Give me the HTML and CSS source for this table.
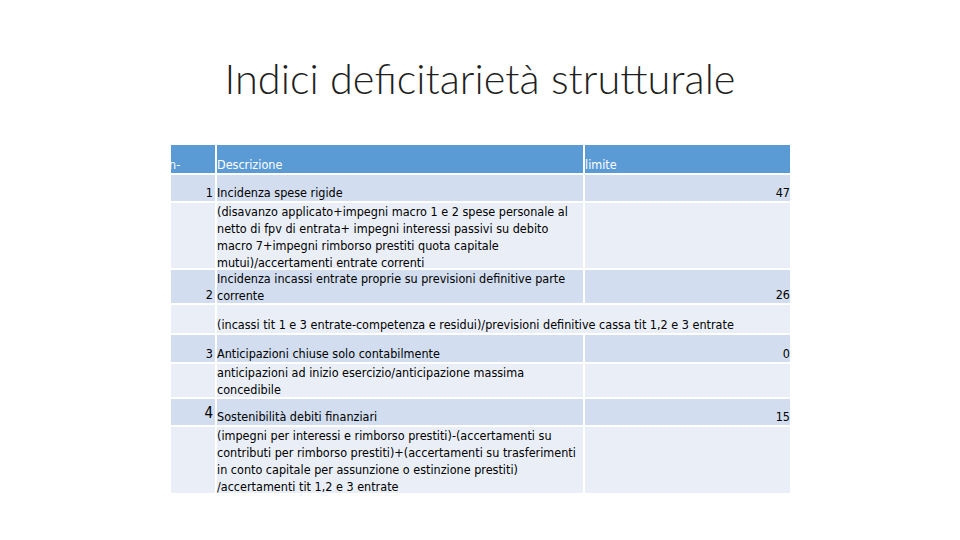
FILE: index.html
```html
<!DOCTYPE html>
<html lang="it">
<head>
<meta charset="utf-8">
<title>Indici deficitarietà strutturale</title>
<link rel="stylesheet" href="styles.css">
</head>
<body>
<div class="slide">
  <header class="title-wrap">
    <h1 class="title">Indici deficitarietà strutturale</h1>
  </header>
  <div class="table">
    <div class="c hd bot first">n-</div>
    <div class="c hd bot">Descrizione</div>
    <div class="c hd bot">limite</div>

    <div class="c mid bot num">1</div>
    <div class="c mid bot">Incidenza spese rigide</div>
    <div class="c mid bot val">47</div>

    <div class="c lt"></div>
    <div class="c lt top"><div>(disavanzo applicato+impegni macro 1 e 2 spese personale al<br>netto di fpv di entrata+ impegni interessi passivi su debito<br>macro 7+impegni rimborso prestiti quota capitale<br>mutui)/accertamenti entrate correnti</div></div>
    <div class="c lt"></div>

    <div class="c mid bot num">2</div>
    <div class="c mid top"><div>Incidenza incassi entrate proprie su previsioni definitive parte<br>corrente</div></div>
    <div class="c mid bot val">26</div>

    <div class="c lt"></div>
    <div class="c lt bot span">(incassi tit 1 e 3 entrate-competenza e residui)/previsioni definitive cassa tit 1,2 e 3 entrate</div>

    <div class="c mid bot num">3</div>
    <div class="c mid bot">Anticipazioni chiuse solo contabilmente</div>
    <div class="c mid bot val">0</div>

    <div class="c lt"></div>
    <div class="c lt top"><div>anticipazioni ad inizio esercizio/anticipazione massima<br>concedibile</div></div>
    <div class="c lt"></div>

    <div class="c mid bot num big">4</div>
    <div class="c mid bot">Sostenibilità debiti finanziari</div>
    <div class="c mid bot val">15</div>

    <div class="c lt"></div>
    <div class="c lt top"><div>(impegni per interessi e rimborso prestiti)-(accertamenti su<br>contributi per rimborso prestiti)+(accertamenti su trasferimenti<br>in conto capitale per assunzione o estinzione prestiti)<br>/accertamenti tit 1,2 e 3 entrate</div></div>
    <div class="c lt"></div>
  </div>
</div>
</body>
</html>
```

FILE: styles.css
```css
html, body {
  margin: 0;
  padding: 0;
  background: #ffffff;
}

.slide {
  width: 960px;
  height: 540px;
  display: flex;
  flex-direction: column;
  background: #ffffff;
  overflow: hidden;
}

.title-wrap {
  height: 145px;
  padding-top: 50px;
  box-sizing: border-box;
  display: flex;
  justify-content: center;
}

.title {
  margin: 0;
  font-family: "Lato", "Liberation Sans", sans-serif;
  font-weight: 300;
  font-size: 41.5px;
  line-height: 56px;
  color: #1f1f1f;
  letter-spacing: 0;
}

.table {
  margin-left: 171px;
  width: 619px;
  display: grid;
  grid-template-columns: 44px 366px 205px;
  grid-template-rows: 28px 26px 65px 33px 28px 27px 33px 26px 66px;
  column-gap: 2px;
  row-gap: 2px;
  font-family: "DejaVu Sans Condensed", "DejaVu Sans", sans-serif;
  font-stretch: condensed;
  font-size: 12.5px;
  line-height: 17px;
  color: #000000;
}

.c {
  display: flex;
  white-space: nowrap;
  min-width: 0;
}

.hd {
  background: #5b9bd5;
  color: #ffffff;
}

.mid {
  background: #d2deef;
}

.lt {
  background: #eaeff7;
}

.bot {
  align-items: flex-end;
}

.top {
  align-items: flex-start;
}

.first {
  text-indent: -2px;
}

.num {
  justify-content: flex-end;
  padding-right: 2px;
}

.big {
  font-size: 15px;
  padding-bottom: 3px;
}

.val {
  justify-content: flex-end;
}

.span {
  grid-column: 2 / 4;
}
```
